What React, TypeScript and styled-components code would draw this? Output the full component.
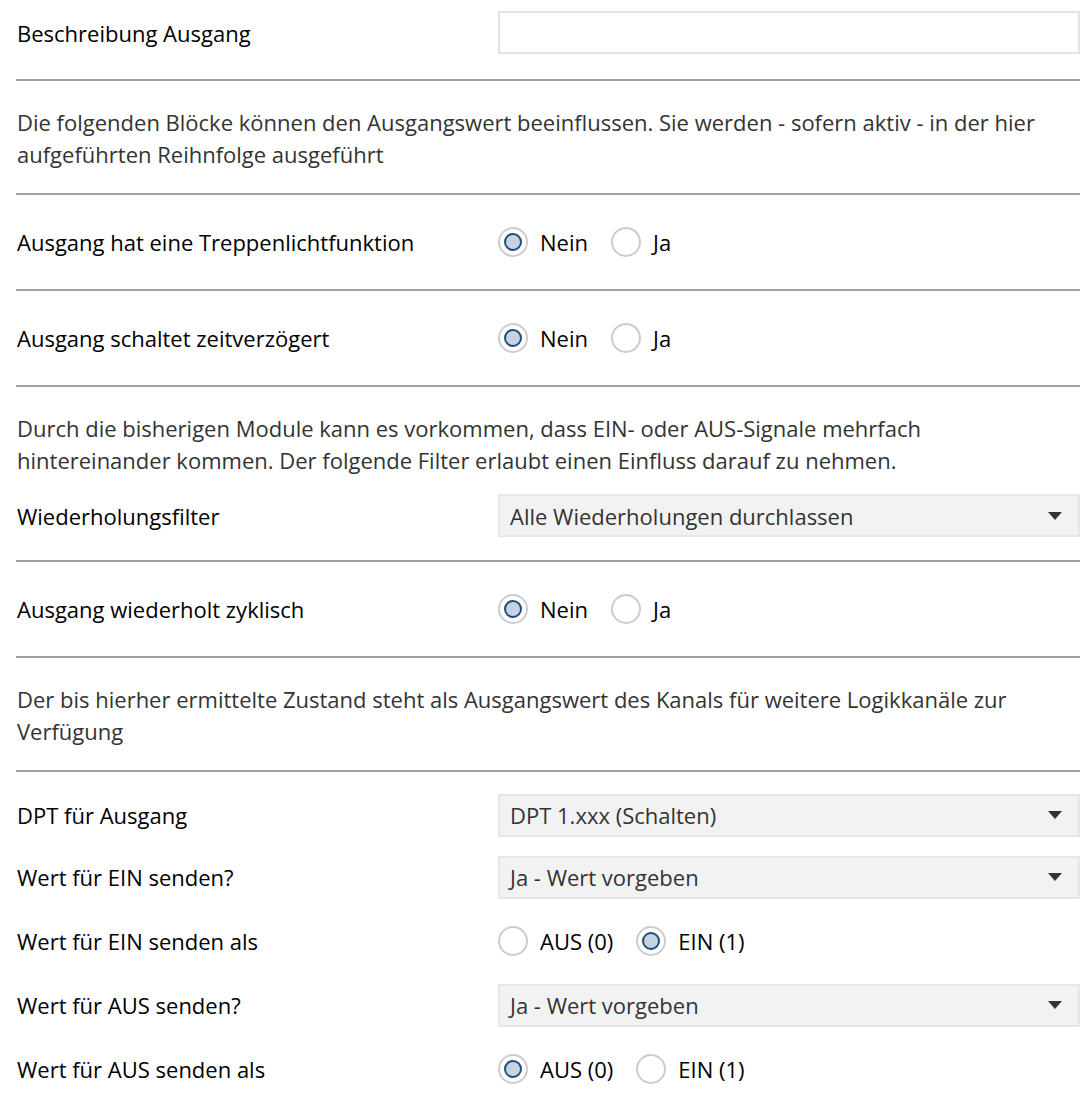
import styled, { createGlobalStyle } from "styled-components";

const GlobalStyle = createGlobalStyle`
  html, body {
    margin: 0;
    padding: 0;
    background: #ffffff;
  }
  body {
    font-family: "Open Sans", "Noto Sans", "Liberation Sans", sans-serif;
    font-size: 22px;
    color: #000000;
  }
`;

// Ganze Seite mit den Parametern
const Page = styled.div`
  width: 1087px;
  box-sizing: border-box;
  padding: 0 7px 0 16px;
`;

const Divider = styled.div<{ $mb?: number }>`
  height: 2px;
  background: #a0a0a0;
  margin: 14px 0 ${(p) => p.$mb ?? 14}px;
`;

// Zeile: Label links, Eingabe rechts
const Row = styled.div<{ $h: number }>`
  display: grid;
  grid-template-columns: 482px 1fr;
  align-items: center;
  height: ${(p) => p.$h}px;
`;

const Label = styled.div`
  padding-left: 1px;
  color: #000000;
  white-space: nowrap;
`;

const Description = styled.p`
  margin: 0;
  padding: 11px 0 9px 1px;
  line-height: 32px;
  color: #333333;
  white-space: nowrap;
`;

const TextBox = styled.input`
  all: unset;
  box-sizing: border-box;
  height: 43px;
  width: 100%;
  border: 2px solid #e3e3e3;
  background: #ffffff;
`;

const Select = styled.div`
  box-sizing: border-box;
  height: 43px;
  display: flex;
  align-items: center;
  justify-content: space-between;
  padding: 0 16px 0 10px;
  background: #f2f2f2;
  border: 2px solid #e6e6e6;
  color: #333333;
`;

const Arrow = styled.span`
  width: 0;
  height: 0;
  border-left: 7px solid transparent;
  border-right: 7px solid transparent;
  border-top: 8px solid #333333;
`;

const RadioGroup = styled.div`
  display: flex;
  align-items: center;
  gap: 23px;
`;

const RadioItem = styled.label`
  display: flex;
  align-items: center;
  gap: 12px;
  color: #000000;
`;

const Circle = styled.span<{ $checked: boolean }>`
  box-sizing: border-box;
  width: 30px;
  height: 30px;
  border-radius: 50%;
  border: 2px solid #cccccc;
  display: flex;
  align-items: center;
  justify-content: center;
  background: #ffffff;

  &::after {
    content: "";
    display: ${(p) => (p.$checked ? "block" : "none")};
    box-sizing: border-box;
    width: 18px;
    height: 18px;
    border-radius: 50%;
    border: 2px solid #1f4e79;
    background: #c5d3e2;
  }
`;

type RadioProps = { options: string[]; selected: number };

const Radios = ({ options, selected }: RadioProps) => (
  <RadioGroup>
    {options.map((o, i) => (
      <RadioItem key={o}>
        <Circle $checked={i === selected} />
        {o}
      </RadioItem>
    ))}
  </RadioGroup>
);

const Dropdown = ({ value }: { value: string }) => (
  <Select>
    <span>{value}</span>
    <Arrow />
  </Select>
);

export default function App() {
  return (
    <>
      <GlobalStyle />
      <Page>
        <Row $h={65}>
          <Label>Beschreibung Ausgang</Label>
          <TextBox type="text" />
        </Row>
        <Divider />
        <Description>
          Die folgenden Blöcke können den Ausgangswert beeinflussen. Sie werden - sofern aktiv - in der hier
          <br />
          aufgeführten Reihnfolge ausgeführt
        </Description>
        <Divider />
        <Row $h={66}>
          <Label>Ausgang hat eine Treppenlichtfunktion</Label>
          <Radios options={["Nein", "Ja"]} selected={0} />
        </Row>
        <Divider />
        <Row $h={66}>
          <Label>Ausgang schaltet zeitverzögert</Label>
          <Radios options={["Nein", "Ja"]} selected={0} />
        </Row>
        <Divider />
        <Description>
          Durch die bisherigen Module kann es vorkommen, dass EIN- oder AUS-Signale mehrfach
          <br />
          hintereinander kommen. Der folgende Filter erlaubt einen Einfluss darauf zu nehmen.
        </Description>
        <Row $h={61}>
          <Label>Wiederholungsfilter</Label>
          <Dropdown value="Alle Wiederholungen durchlassen" />
        </Row>
        <Divider />
        <Row $h={66}>
          <Label>Ausgang wiederholt zyklisch</Label>
          <Radios options={["Nein", "Ja"]} selected={0} />
        </Row>
        <Divider />
        <Description>
          Der bis hierher ermittelte Zustand steht als Ausgangswert des Kanals für weitere Logikkanäle zur
          <br />
          Verfügung
        </Description>
        <Divider $mb={12} />
        <Row $h={62}>
          <Label>DPT für Ausgang</Label>
          <Dropdown value="DPT 1.xxx (Schalten)" />
        </Row>
        <Row $h={62}>
          <Label>Wert für EIN senden?</Label>
          <Dropdown value="Ja - Wert vorgeben" />
        </Row>
        <Row $h={66}>
          <Label>Wert für EIN senden als</Label>
          <Radios options={["AUS (0)", "EIN (1)"]} selected={1} />
        </Row>
        <Row $h={62}>
          <Label>Wert für AUS senden?</Label>
          <Dropdown value="Ja - Wert vorgeben" />
        </Row>
        <Row $h={66}>
          <Label>Wert für AUS senden als</Label>
          <Radios options={["AUS (0)", "EIN (1)"]} selected={0} />
        </Row>
      </Page>
    </>
  );
}
